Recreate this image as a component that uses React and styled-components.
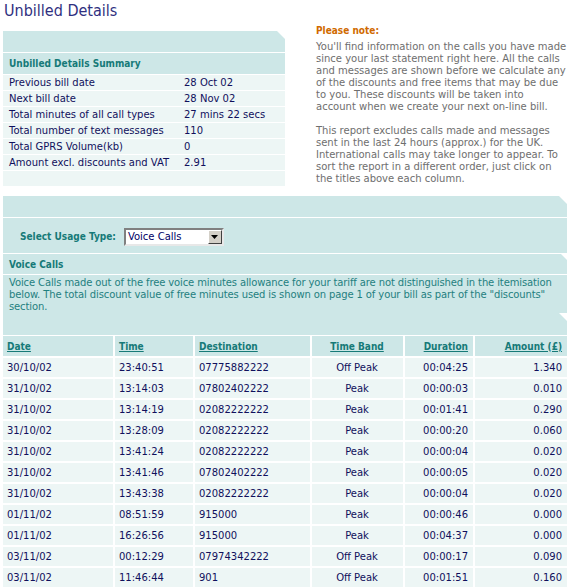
import styled, { createGlobalStyle } from "styled-components";

const GlobalStyle = createGlobalStyle`
  body {
    margin: 0;
    background: #ffffff;
    font-family: "DejaVu Sans", Verdana, sans-serif;
    font-size: 10px;
  }
`;

const summary = [
  ["Previous bill date", "28 Oct 02"],
  ["Next bill date", "28 Nov 02"],
  ["Total minutes of all call types", "27 mins 22 secs"],
  ["Total number of text messages", "110"],
  ["Total GPRS Volume(kb)", "0"],
  ["Amount excl. discounts and VAT", "2.91"],
];

const calls = [
  ["30/10/02", "23:40:51", "07775882222", "Off Peak", "00:04:25", "1.340"],
  ["31/10/02", "13:14:03", "07802402222", "Peak", "00:00:03", "0.010"],
  ["31/10/02", "13:14:19", "02082222222", "Peak", "00:01:41", "0.290"],
  ["31/10/02", "13:28:09", "02082222222", "Peak", "00:00:20", "0.060"],
  ["31/10/02", "13:41:24", "02082222222", "Peak", "00:00:04", "0.020"],
  ["31/10/02", "13:41:46", "07802402222", "Peak", "00:00:05", "0.020"],
  ["31/10/02", "13:43:38", "02082222222", "Peak", "00:00:04", "0.020"],
  ["01/11/02", "08:51:59", "915000", "Peak", "00:00:46", "0.000"],
  ["01/11/02", "16:26:56", "915000", "Peak", "00:04:37", "0.000"],
  ["03/11/02", "00:12:29", "07974342222", "Off Peak", "00:00:17", "0.090"],
  ["03/11/02", "11:46:44", "901", "Off Peak", "00:01:51", "0.160"],
];

const columns = [
  { label: "Date", align: "left" },
  { label: "Time", align: "left" },
  { label: "Destination", align: "left" },
  { label: "Time Band", align: "center" },
  { label: "Duration", align: "right" },
  { label: "Amount (£)", align: "right" },
];

function App() {
  return (
    <>
      <GlobalStyle />
      <Page>
        <Title>Unbilled Details</Title>
        <Top>
          <SummaryPanel>
            <Band />
            <PanelHead>Unbilled Details Summary</PanelHead>
            {summary.map(([label, value]) => (
              <SummaryRow key={label}>
                <span>{label}</span>
                <span>{value}</span>
              </SummaryRow>
            ))}
            <SummaryRow />
          </SummaryPanel>
          <Note>
            <NoteTitle>Please note:</NoteTitle>
            <NoteText>
              You'll find information on the calls you have made<br />
              since your last statement right here. All the calls<br />
              and messages are shown before we calculate any<br />
              of the discounts and free items that may be due<br />
              to you. These discounts will be taken into<br />
              account when we create your next on-line bill.
            </NoteText>
            <NoteText>
              This report excludes calls made and messages<br />
              sent in the last 24 hours (approx.) for the UK.<br />
              International calls may take longer to appear. To<br />
              sort the report in a different order, just click on<br />
              the titles above each column.
            </NoteText>
          </Note>
        </Top>

        <UsagePanel>
          <Band />
          <SelectRow>
            <SelectLabel>Select Usage Type:</SelectLabel>
            <FakeSelect>
              <span>Voice Calls</span>
              <SelectButton>
                <svg width="7" height="4" viewBox="0 0 7 4">
                  <path d="M0 0h7L3.5 4z" fill="#000" />
                </svg>
              </SelectButton>
            </FakeSelect>
          </SelectRow>
          <SectionHead>Voice Calls</SectionHead>
          <Description>
            Voice Calls made out of the free voice minutes allowance for your tariff are not distinguished in the itemisation<br />
            below. The total discount value of free minutes used is shown on page 1 of your bill as part of the "discounts"<br />
            section.
          </Description>
        </UsagePanel>

        <CallTable>
          <Band $tall />
          <HeadRow>
            {columns.map((c) => (
              <HeadCell key={c.label} $align={c.align}>
                <a>{c.label}</a>
              </HeadCell>
            ))}
          </HeadRow>
          {calls.map((row, i) => (
            <CallRow key={i}>
              {row.map((v, j) => (
                <Cell key={j} $align={columns[j].align}>{v}</Cell>
              ))}
            </CallRow>
          ))}
        </CallTable>
      </Page>
    </>
  );
}

export default App;

const Page = styled.div`
  width: 564px;
  margin-left: 3px;
  display: flex;
  flex-direction: column;
`;

const Title = styled.h1`
  margin: 0 0 0 1px;
  height: 31px;
  font-family: "DejaVu Sans Condensed", Tahoma, sans-serif;
  font-size: 16px;
  font-weight: normal;
  line-height: 22px;
  color: #2f2f80;
`;

const Top = styled.div`
  display: flex;
  align-items: flex-start;
  gap: 31px;
`;

const SummaryPanel = styled.div`
  width: 282px;
  display: flex;
  flex-direction: column;
  gap: 1px;
`;

const Band = styled.div`
  height: ${(p) => (p.$tall ? "22px" : "21px")};
  background: #cde7e7;
  clip-path: polygon(0 0, calc(100% - 8px) 0, 100% 8px, 100% 100%, 0 100%);
`;

const PanelHead = styled.div`
  height: 21px;
  display: flex;
  align-items: center;
  padding-left: 6px;
  background: #cde7e7;
  color: #167a78;
  font-family: "DejaVu Sans Condensed", Tahoma, sans-serif;
  font-weight: bold;
  font-size: 10px;
`;

const SummaryRow = styled.div`
  height: 15px;
  display: grid;
  grid-template-columns: 175px 1fr;
  align-items: center;
  padding-left: 6px;
  background: #edf6f5;
  color: #10105c;
  line-height: 15px;
`;

const Note = styled.div`
  margin-top: -6px;
  display: flex;
  flex-direction: column;
  gap: 12px;
`;

const NoteTitle = styled.div`
  font-family: "DejaVu Sans Condensed", Tahoma, sans-serif;
  font-weight: bold;
  font-size: 10px;
  line-height: 12px;
  color: #d06a00;
  margin-bottom: -8px;
`;

const NoteText = styled.p`
  margin: 0;
  line-height: 12px;
  color: #6e6e6e;
  white-space: nowrap;
`;

const UsagePanel = styled.div`
  margin-top: 10px;
  display: flex;
  flex-direction: column;
  gap: 1px;
`;

const SelectRow = styled.div`
  height: 35px;
  display: flex;
  align-items: center;
  gap: 8px;
  padding: 2px 0 0 17px;
  box-sizing: border-box;
  background: #cde7e7;
`;

const SelectLabel = styled.span`
  font-family: "DejaVu Sans Condensed", Tahoma, sans-serif;
  font-weight: bold;
  color: #167a78;
`;

const FakeSelect = styled.div`
  width: 100px;
  height: 18px;
  box-sizing: border-box;
  display: flex;
  align-items: center;
  justify-content: space-between;
  background: #ffffff;
  border: 2px solid;
  border-color: #808080 #e8e8e8 #e8e8e8 #808080;
  padding-left: 2px;
  color: #000066;

  span {
    line-height: 14px;
  }
`;

const SelectButton = styled.div`
  width: 14px;
  height: 14px;
  box-sizing: border-box;
  display: flex;
  align-items: center;
  justify-content: center;
  background: #d4d0c8;
  border: 1px solid;
  border-color: #ffffff #404040 #404040 #ffffff;
`;

const SectionHead = styled.div`
  height: 20px;
  display: flex;
  align-items: center;
  padding-left: 6px;
  background: #cde7e7;
  color: #167a78;
  font-family: "DejaVu Sans Condensed", Tahoma, sans-serif;
  font-weight: bold;
  clip-path: polygon(0 0, calc(100% - 6px) 0, 100% 6px, 100% 100%, 0 100%);
`;

const Description = styled.div`
  padding: 2px 6px 0 6px;
  background: #cde7e7;
  color: #1f8080;
  line-height: 12px;
  letter-spacing: -0.12px;
  white-space: nowrap;
`;

const CallTable = styled.div`
  display: flex;
  flex-direction: column;
  gap: 2px;
`;

const rowGrid = `
  display: grid;
  grid-template-columns: 110px 78px 115px 91px 68px 92px;
  column-gap: 2px;
`;

const HeadRow = styled.div`
  ${rowGrid}
  height: 20px;
  margin-top: -1px;
`;

const HeadCell = styled.div`
  display: flex;
  align-items: center;
  justify-content: ${(p) =>
    p.$align === "right" ? "flex-end" : p.$align === "center" ? "center" : "flex-start"};
  padding: 0 5px 0 4px;
  background: #cde7e7;
  font-family: "DejaVu Sans Condensed", Tahoma, sans-serif;
  font-weight: bold;

  a {
    color: #167a78;
    text-decoration: underline;
    cursor: pointer;
  }
`;

const CallRow = styled.div`
  ${rowGrid}
  height: 19px;
`;

const Cell = styled.div`
  display: flex;
  align-items: center;
  justify-content: ${(p) =>
    p.$align === "right" ? "flex-end" : p.$align === "center" ? "center" : "flex-start"};
  padding: 0 5px 0 4px;
  background: #edf6f5;
  color: #10105c;
`;
